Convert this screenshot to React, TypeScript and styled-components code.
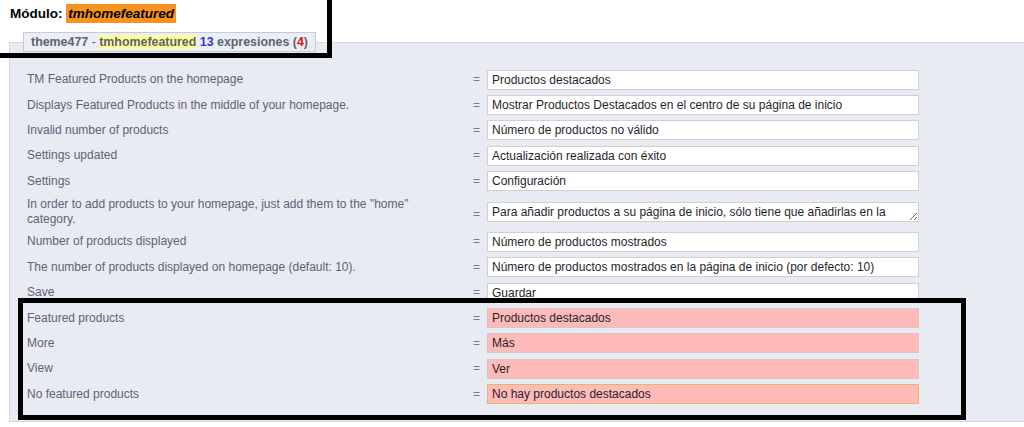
import React from "react";
import styled, { createGlobalStyle } from "styled-components";

const GlobalStyle = createGlobalStyle`
  html, body {
    margin: 0;
    padding: 0;
    background: #ffffff;
    overflow: hidden;
  }
  body {
    font-family: "Liberation Sans", Arial, sans-serif;
  }
`;

const Page = styled.div`
  position: relative;
  width: 1024px;
  height: 427px;
  overflow: hidden;
`;

const ModuleTitle = styled.h3`
  margin: 0;
  padding: 4px 0 0 10px;
  height: 19px;
  font-size: 13.5px;
  line-height: 19px;
  font-weight: bold;
  color: #000;
`;

const ModuleName = styled.span`
  display: inline-block;
  padding: 0 2px;
  background: #f7931e;
  font-style: italic;
`;

const Fieldset = styled.fieldset`
  margin: 9px -40px 0 9px;
  padding: 15px 0 14px 12px;
  border: 1px solid #d4d8e4;
  background: #e9ebf3;
  min-width: 0;
`;

const Legend = styled.legend`
  margin-left: 1px;
  padding: 0 7px;
  border: 1px solid #c6cad8;
  background: #eceef5;
  font-size: 12.4px;
  line-height: 18px;
  font-weight: bold;
  color: #5e6272;
`;

const Dash = styled.span`
  font-weight: normal;
`;

const Highlight = styled.span`
  background: #ffff99;
`;

const Count = styled.span`
  color: #3333dd;
`;

const Missing = styled.span`
  color: #e01010;
`;

const Table = styled.div`
  margin-left: 5px;
  display: flex;
  flex-direction: column;
`;

const Row = styled.div`
  display: grid;
  grid-template-columns: 445px 15px 432px;
  align-items: center;
  padding: 2.7px 0;
`;

const Label = styled.div`
  padding-right: 40px;
  font-size: 12px;
  line-height: 15px;
  color: #5f6272;
`;

const Equals = styled.div<{ $low?: boolean }>`
  padding: ${(p) => (p.$low ? "6px 7px 0 0" : "0 7px 0 0")};
  text-align: right;
  font-size: 12px;
  line-height: 15px;
  color: #777a88;
`;

const Field = styled.input<{ $missing?: boolean; $focused?: boolean }>`
  box-sizing: border-box;
  width: 432px;
  height: 20px;
  margin: 0;
  padding: 0 4px;
  border: 1px solid
    ${(p) => (p.$focused ? "#e7b863" : p.$missing ? "#d6c4c6" : "#d0d0d4")};
  background: ${(p) => (p.$missing ? "#ffbaba" : "#ffffff")};
  font-family: "Liberation Sans", Arial, sans-serif;
  font-size: 12px;
  color: #1f1f2a;
  outline: none;
`;

const Area = styled.textarea`
  box-sizing: border-box;
  width: 432px;
  height: 20px;
  margin: 0;
  padding: 2px 4px;
  border: 1px solid #d0d0d4;
  background: #ffffff;
  font-family: "Liberation Sans", Arial, sans-serif;
  font-size: 12px;
  line-height: 15px;
  color: #1f1f2a;
  overflow: hidden;
  resize: both;
  display: block;
  outline: none;
`;

const Annotation = styled.div<{ $top: number; $left: number; $width: number; $height: number }>`
  position: absolute;
  top: ${(p) => p.$top}px;
  left: ${(p) => p.$left}px;
  width: ${(p) => p.$width}px;
  height: ${(p) => p.$height}px;
  box-sizing: border-box;
  border: 5px solid #000;
  pointer-events: none;
`;

type Entry = {
  label: string;
  value: string;
  missing?: boolean;
  focused?: boolean;
  multiline?: boolean;
};

const entries: Entry[] = [
  { label: "TM Featured Products on the homepage", value: "Productos destacados" },
  {
    label: "Displays Featured Products in the middle of your homepage.",
    value: "Mostrar Productos Destacados en el centro de su página de inicio",
  },
  { label: "Invalid number of products", value: "Número de productos no válido" },
  { label: "Settings updated", value: "Actualización realizada con éxito" },
  { label: "Settings", value: "Configuración" },
  {
    label: 'In order to add products to your homepage, just add them to the "home" category.',
    value:
      'Para añadir productos a su página de inicio, sólo tiene que añadirlas en la categoría "inicio".',
    multiline: true,
  },
  { label: "Number of products displayed", value: "Número de productos mostrados" },
  {
    label: "The number of products displayed on homepage (default: 10).",
    value: "Número de productos mostrados en la página de inicio (por defecto: 10)",
  },
  { label: "Save", value: "Guardar" },
  { label: "Featured products", value: "Productos destacados", missing: true },
  { label: "More", value: "Más", missing: true },
  { label: "View", value: "Ver", missing: true },
  { label: "No featured products", value: "No hay productos destacados", missing: true, focused: true },
];

export default function App() {
  return (
    <Page>
      <GlobalStyle />
      <ModuleTitle>
        Módulo: <ModuleName>tmhomefeatured</ModuleName>
      </ModuleTitle>
      <Fieldset>
        <Legend>
          theme477 <Dash>-</Dash> <Highlight>tmhomefeatured</Highlight> <Count>13</Count> expresiones (
          <Missing>4</Missing>)
        </Legend>
        <Table>
          {entries.map((e) => (
            <Row key={e.label}>
              <Label>{e.label}</Label>
              <Equals $low={e.multiline}>=</Equals>
              {e.multiline ? (
                <Area rows={1} defaultValue={e.value} />
              ) : (
                <Field type="text" defaultValue={e.value} $missing={e.missing} $focused={e.focused} />
              )}
            </Row>
          ))}
        </Table>
      </Fieldset>
      <Annotation $top={-10} $left={-10} $width={342} $height={68} />
      <Annotation $top={298} $left={18} $width={948} $height={122} />
    </Page>
  );
}
